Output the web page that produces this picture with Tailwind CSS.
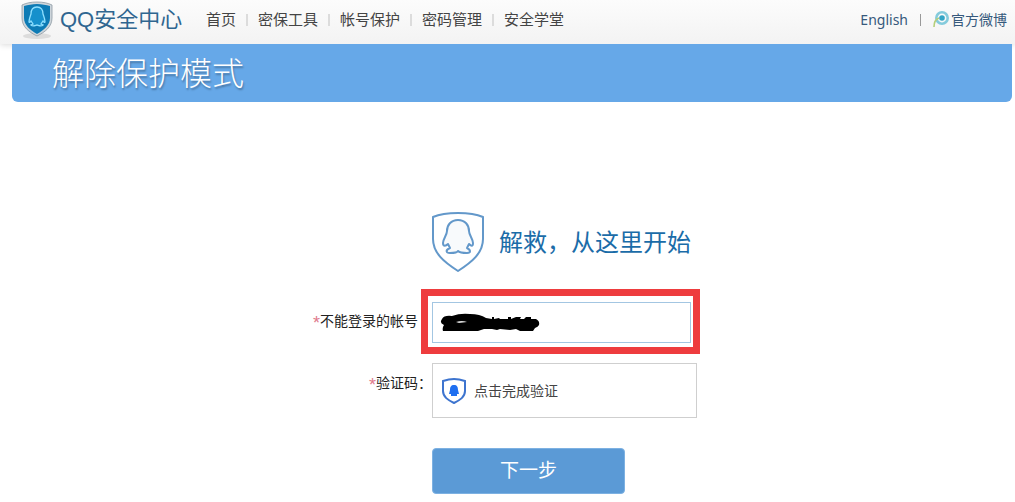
<!DOCTYPE html>
<html lang="zh-CN">
<head>
    <meta charset="UTF-8">
    <meta name="viewport" content="width=device-width, initial-scale=1.0">
    <title>QQ安全中心 - 解除保护模式</title>
    <script src="https://cdn.jsdelivr.net/npm/@tailwindcss/browser@4"></script>
</head>
<body class="min-h-screen bg-white font-['Liberation_Sans','Noto_Sans_CJK_SC',sans-serif] text-[#222]">
    <header class="flex h-11 items-center bg-linear-to-b from-[#fcfcfc] to-[#f3f3f3] pb-1 pl-5 pr-2 shadow-[0_1px_6px_rgba(0,0,0,0.15)]">
        <a href="#" class="flex items-center text-[#2f6690]">
            <svg class="h-10 w-9" viewBox="0 0 36 40" fill="none">
                <ellipse cx="17" cy="36" rx="14" ry="3" fill="#dcdcdc"/>
                <path d="M17 2 C11 2 6 3 2 5 V18 C2 27 9 32 17 36 C25 32 32 27 32 18 V5 C28 3 23 2 17 2Z" fill="#cdd5db" stroke="#8e9aa3" stroke-width=".8"/>
                <path d="M17 4 C12 4 8 5 4 6 V18 C4 25 10 30 17 34 C24 30 30 25 30 18 V6 C26 5 22 4 17 4Z" fill="#0d7bb5"/>
                <path d="M17 7 C13 7 11 10 11 14 C10 17 9 19 9 22 C10 23 11 21 11 21 L13 24 L11 25 C13 27 16 25 17 25 C18 25 21 27 23 25 L21 24 L23 21 C23 21 24 23 25 22 C25 19 24 17 23 14 C23 10 21 7 17 7Z" fill="#1590cc" stroke="#8fe0ff" stroke-width="1.3"/>
            </svg>
            <span class="ml-1 w-[122px] whitespace-nowrap text-[22px] leading-9">QQ安全中心</span>
        </a>
        <nav class="ml-6 flex items-center gap-2.5 whitespace-nowrap text-[15px] text-[#444]">
            <a href="#">首页</a>
            <span class="h-3 w-0.5 bg-[#dcdcdc]"></span>
            <a href="#">密保工具</a>
            <span class="h-3 w-0.5 bg-[#dcdcdc]"></span>
            <a href="#">帐号保护</a>
            <span class="h-3 w-0.5 bg-[#dcdcdc]"></span>
            <a href="#">密码管理</a>
            <span class="h-3 w-0.5 bg-[#dcdcdc]"></span>
            <a href="#">安全学堂</a>
        </nav>
        <div class="ml-auto flex items-center whitespace-nowrap text-sm text-[#36597c]">
            <a href="#" class="font-['Noto_Sans',sans-serif]">English</a>
            <span class="mx-3 h-3 w-px bg-[#999]"></span>
            <a href="#" class="flex items-center">
                <svg class="size-[18px]" viewBox="0 0 18 18" fill="none">
                    <circle cx="9" cy="7" r="5.7" stroke="#84cbdc" stroke-width="2.6"/>
                    <circle cx="9" cy="7" r="2.8" fill="#35a5c6"/>
                    <path d="M1 16 C1 11 3 8 6 7" stroke="#b5cf7a" stroke-width="1.6"/>
                </svg>
                官方微博
            </a>
        </div>
    </header>

    <div class="relative ml-3 mr-[3px] flex h-[58px] items-center rounded-b-md bg-[#66a8e8] pl-10 pt-0.5">
        <h1 class="text-[32px] font-light text-white [text-shadow:1px_2px_2px_rgba(0,0,0,0.3)]">解除保护模式</h1>
    </div>

    <form class="ml-3 mt-[109px] grid grid-cols-[420px_1fr]">
        <div class="col-start-2 flex items-center gap-3.5">
            <svg class="h-[62px] w-[53px]" viewBox="0 0 53 62" fill="none" stroke="#6398ca" stroke-width="2" stroke-linejoin="round">
                <path d="M26 2 C17 2 8 3 1 6 V28 C1 42 12 51 26 60 C40 51 51 42 51 28 V6 C44 3 35 2 26 2Z"/>
                <path d="M26 9 C19 9 15 14 15 20 C15 24 11 28 11 32 C11 36 14 35 16 33 L18 37 C13 39 14 42 18 42 C22 42 25 42 26 40 C28 42 31 42 35 42 C39 42 39 39 35 37 L37 33 C39 35 41 36 41 32 C41 28 37 24 37 20 C37 14 33 9 26 9Z" fill="#f8fafc"/>
            </svg>
            <h2 class="pt-0.5 text-2xl text-[#1b6ca8]">解救，从这里开始</h2>
        </div>

        <label for="account" class="mt-4 self-center pr-3.5 text-right text-sm"><span class="text-lg/5 align-[-3px] text-[#e07a8c]">*</span>不能登录的帐号</label>
        <div class="relative -ml-[11px] mt-4 w-[279px] border-[7px] border-[#ee3c3e] px-1 pb-1 pt-1.5">
            <input id="account" type="text" class="block h-[41px] w-[259px] border border-[#a3c6e2] px-2 text-sm outline-none">
            <!-- marker stroke that hides the account number -->
            <svg class="absolute left-3 top-4 h-6 w-[104px]" viewBox="0 0 104 24">
                <path d="M2 7 Q4 3 12 4 Q20 1 30 2 Q40 2 46 6 L52 7 V5 H54 V7 L59 6 L60 7 H68 V5 H71 V7 L76 5 H81 L80 7 H84 L86 5 H91 V7 L96 7 Q100 9 99 13 Q98 15 95 16 L93 19 H80 L76 17 L70 18 L60 17 L57 18 L52 17 L44 17 L38 19 L3 19 Q2 16 4 13 Q-1 11 2 7Z"/>
                <path d="M16 10 Q22 8 27 10 L19 11Z" fill="#ddd"/>
            </svg>
        </div>

        <label for="captcha" class="mt-[19px] text-right text-sm"><span class="text-lg/5 align-[-3px] text-[#e07a8c]">*</span>验证码：</label>
        <button id="captcha" type="button" class="mt-[9px] flex h-[55px] w-[265px] items-center gap-2 border border-[#cfcfcf] pl-[9px] text-sm text-[#444]">
            <svg class="h-[26px] w-6" viewBox="0 0 24 26" fill="none">
                <path d="M12 1 C8 1 4 2 1 3 V13 C1 19 6 22 12 25 C18 22 23 19 23 13 V3 C20 2 16 1 12 1Z" stroke="#3d74cf" stroke-width="2"/>
                <path d="M12 7 C9 7 8 9 8 12 L7 16 L9 16 L9 18 H15 L15 16 L17 16 L16 12 C16 9 15 7 12 7Z" fill="#1f6ff0"/>
            </svg>
            点击完成验证
        </button>

        <button type="submit" class="col-start-2 mb-2 mt-[30px] h-[46px] w-[193px] rounded border border-[#7db1e2] bg-[#5b9ad6] text-[19px] text-white">下一步</button>
    </form>
</body>
</html>
